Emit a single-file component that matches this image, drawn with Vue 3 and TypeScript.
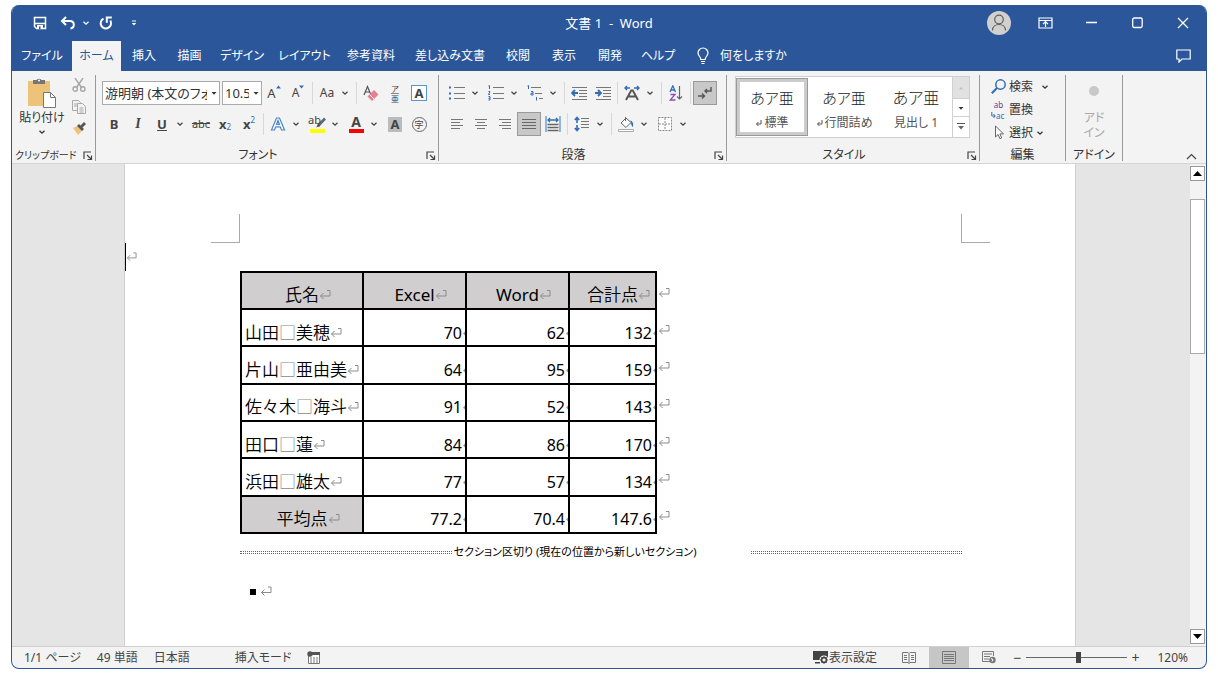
<script setup lang="ts">
import { ref } from 'vue'

interface Tab { label: string; active?: boolean }
interface Header { label: string; latin?: boolean }
interface Row { name: string; cells: string[]; total?: boolean }

const tabs: Tab[] = [
  { label: 'ファイル' },
  { label: 'ホーム', active: true },
  { label: '挿入' },
  { label: '描画' },
  { label: 'デザイン' },
  { label: 'レイアウト' },
  { label: '参考資料' },
  { label: '差し込み文書' },
  { label: '校閲' },
  { label: '表示' },
  { label: '開発' },
  { label: 'ヘルプ' },
]

const headers: Header[] = [
  { label: '氏名' },
  { label: 'Excel', latin: true },
  { label: 'Word', latin: true },
  { label: '合計点' },
]

const rows: Row[] = [
  { name: '山田□美穂', cells: ['70', '62', '132'] },
  { name: '片山□亜由美', cells: ['64', '95', '159'] },
  { name: '佐々木□海斗', cells: ['91', '52', '143'] },
  { name: '田口□蓮', cells: ['84', '86', '170'] },
  { name: '浜田□雄太', cells: ['77', '57', '134'] },
  { name: '平均点', cells: ['77.2', '70.4', '147.6'], total: true },
]

const zoom = ref<number>(52)
</script>

<template>
  <svg class="defs" aria-hidden="true">
    <symbol id="chev" viewBox="0 0 8 8"><path d="M1.5 2.8 4 5.2 6.500 2.8" fill="none" stroke="currentColor" stroke-width="1.3" /></symbol>
    <symbol id="tri" viewBox="0 0 8 8"><path d="M1.500 3h5L4 5.800z" fill="currentColor" /></symbol>
    <symbol id="launch" viewBox="0 0 10 10"><path d="M1 8V1h7M4 4l4 4M8.500 4.500v4h-4" fill="none" stroke="#444" stroke-width="1.200" /></symbol>
    <symbol id="ret" viewBox="0 0 12 12"><path d="M8 1.500h3v5.500H1.500M4.500 4l-3 3 3 3" fill="none" stroke="#8c8c8c" stroke-width="1" /></symbol>
    <symbol id="retsmall" viewBox="0 0 7 7"><path d="M6 0v4H1.500M3.500 2l-2 2 2 2" fill="none" stroke="#555" stroke-width="1" /></symbol>
  </svg>
  <main class="window">
    <header class="titlebar">
      <div class="quick">
        <button aria-label="上書き保存"><svg width="14" height="14" viewBox="0 0 14 14"><path d="M1.500 1.500h11v11h-9l-2-2zM2 7.500h10" fill="none" stroke="#fff" stroke-width="1.500" /><path d="M4 9h6v4H4z" fill="#fff" /><path d="M6 10.500h1.500V13H6z" fill="#2b579a" /></svg></button>
        <button aria-label="元に戻す"><svg width="16" height="14" viewBox="0 0 16 14"><path d="M6 1 2 5l4 4M2.500 5H10c5 0 5 7 .5 7.500" fill="none" stroke="#fff" stroke-width="2" /></svg></button>
        <button class="thin" aria-label="元に戻す一覧"><svg width="8" height="8"><use href="#chev" /></svg></button>
        <button aria-label="繰り返し" class="redo"><svg width="14" height="14" viewBox="0 0 14 14"><path d="M4.500 2.600A5.200 5.200 0 1 0 11.300 4.500M12.800 1.500H7.800v5.200" fill="none" stroke="#fff" stroke-width="2" /></svg></button>
        <button aria-label="クイック アクセスのカスタマイズ"><svg width="8" height="8" viewBox="0 0 8 8"><path d="M2 1.500h4v1H2zM1.800 4h4.400L4 6.500z" fill="#fff" /></svg></button>
      </div>
      <h1>文書 1&nbsp; -&nbsp; Word</h1>
      <div class="syscmds">
        <button aria-label="アカウント"><svg width="24" height="24" viewBox="0 0 24 24"><circle cx="12" cy="12" r="12" fill="#d2d0ce" /><circle cx="12" cy="8.500" r="4.300" fill="none" stroke="#605e5c" stroke-width="1.200" /><path d="M5.500 19.500c0-8 13-8 13 0" fill="none" stroke="#605e5c" stroke-width="1.200" /></svg></button>
        <button aria-label="リボンの表示オプション"><svg width="15" height="12" viewBox="0 0 15 12"><path d="M1 1h13v10H1zM1 3.500h13M7.500 10V5M5 7.200l2.500-2.500L10 7.200" fill="none" stroke="#fff" stroke-width="1.200" /></svg></button>
        <button aria-label="最小化"><svg width="11" height="12" viewBox="0 0 11 12"><path d="M0 5.500h11" stroke="#fff" stroke-width="1.300" /></svg></button>
        <button aria-label="最大化"><svg width="11" height="12" viewBox="0 0 11 12"><rect x=".7" y="1" width="9.500" height="9.500" rx="1.500" fill="none" stroke="#fff" stroke-width="1.300" /></svg></button>
        <button aria-label="閉じる"><svg width="12" height="12" viewBox="0 0 12 12"><path d="m1 1 10 10M11 1 1 11" stroke="#fff" stroke-width="1.300" /></svg></button>
      </div>
    </header>

    <nav class="tabs">
      <button v-for="t in tabs" :key="t.label" class="tab" :class="{ active: t.active }">{{ t.label }}</button>
      <button class="tell">
        <svg width="12" height="18" viewBox="0 0 12 18"><path d="M3.800 12.500c0-3-2.800-3.500-2.800-6.500a5 5 0 0 1 10 0c0 3-2.800 3.500-2.800 6.500zM4 14.500h4M4.500 16.500h3" fill="none" stroke="#fff" stroke-width="1.200" /></svg>
        何をしますか
      </button>
      <button class="comment" aria-label="コメント"><svg width="15" height="14" viewBox="0 0 15 14"><path d="M.8 1h13.400v9H6l-3 3v-3H.8z" fill="none" stroke="#fff" stroke-width="1.200" /></svg></button>
    </nav>

    <section class="ribbon">
      <div class="group clipboard">
        <div class="body">
          <button class="paste">
            <svg width="28" height="30" viewBox="0 0 28 30"><path d="M0 3h22v25H0z" fill="#ecc378" /><path d="M5 6V2h3.500a3 3 0 0 1 5 0H17v4z" fill="#767676" /><circle cx="11" cy="2.500" r="1" fill="#fff" /><path d="M15.500 14.500h7l5 5v10h-12z" fill="#fff" stroke="#777" /><path d="M22.500 14.500v5h5" fill="none" stroke="#777" /></svg>
            <span>貼り付け</span>
            <svg width="8" height="8"><use href="#chev" /></svg>
          </button>
          <div class="clips">
            <button aria-label="切り取り"><svg width="14" height="14" viewBox="0 0 14 14"><g fill="none" stroke="#a6a6a6" stroke-width="1.400"><path d="M3 0 9.500 9.500M11 0 4.500 9.500" /><circle cx="3.200" cy="11" r="2.200" /><circle cx="10.800" cy="11" r="2.200" /></g></svg></button>
            <button aria-label="コピー"><svg width="14" height="14" viewBox="0 0 14 14"><g fill="#f3f3f3" stroke="#aaa"><path d="M.5.5h6l2 2v8h-8z" /><path d="M5.500 3.500h5l3 3v7h-8z" /><path d="M2 4h3M2 6h3M7.500 8h4M7.500 10h4M7.500 12h4" /></g></svg></button>
            <button aria-label="書式のコピー"><svg width="14" height="14" viewBox="0 0 14 14"><path d="m1 6 4-2 5 5-4 4z" fill="#ecc378" /><path d="m5 4 2-2 5 5-2 2zM8.500 3.500 12 0l2 2-3.500 3.500z" fill="#555" /></svg></button>
          </div>
        </div>
        <footer><span>クリップボード</span><button aria-label="クリップボードの設定"><svg width="10" height="10"><use href="#launch" /></svg></button></footer>
      </div>

      <div class="group font">
        <div class="body stack">
          <div class="row">
            <label class="combo family"><select aria-label="フォント"><option>游明朝 (本文のフォント - 日本語)</option></select><svg width="8" height="8"><use href="#tri" /></svg></label>
            <label class="combo size"><select aria-label="フォント サイズ"><option>10.5</option></select><svg width="8" height="8"><use href="#tri" /></svg></label>
            <button class="ic grow" aria-label="フォントの拡大">A<svg width="5" height="4" viewBox="0 0 5 4"><path d="M0 3.500h5L2.500.500z" fill="#2f6eb5" /></svg></button>
            <button class="ic grow small" aria-label="フォントの縮小">A<svg width="5" height="4" viewBox="0 0 5 4"><path d="M0 .5h5L2.500 3.500z" fill="#2f6eb5" /></svg></button>
            <i class="sep"></i>
            <button class="split case" aria-label="文字種の変換"><span>Aa</span><svg width="8" height="8"><use href="#chev" /></svg></button>
            <i class="sep"></i>
            <button class="ic" aria-label="書式のクリア"><svg width="16" height="16" viewBox="0 0 16 16"><path d="M1 10 4.500 1.500 8 10M2.200 7h4.600" fill="none" stroke="#555" stroke-width="1.200" /><path d="m4.500 11.500 6.500-6.500 4.500 4.500-6.500 6.500z" fill="#e77f92" /><path d="m6.500 9.500 4.500 4.500" stroke="#fff" stroke-width=".8" /></svg></button>
            <button class="ic ruby" aria-label="ルビ"><span>ア</span><span>亜</span></button>
            <button class="ic" aria-label="囲み線"><b class="boxed">A</b></button>
          </div>
          <div class="row">
            <button class="ic bold">B</button>
            <button class="ic italic">I</button>
            <button class="split bold" aria-label="下線"><u>U</u><svg width="8" height="8"><use href="#chev" /></svg></button>
            <button class="ic strike"><s>abc</s></button>
            <button class="ic script" aria-label="下付き"><b>x</b><sub>2</sub></button>
            <button class="ic script" aria-label="上付き"><b>x</b><sup>2</sup></button>
            <i class="sep"></i>
            <button class="split" aria-label="文字の効果"><svg class="pic" width="16" height="16" viewBox="0 0 16 16"><path d="M1.500 14 6.500 2h3l5 12h-3l-1.200-3.200H5.700L4.500 14zM6.500 8.500h3L8 4.500z" fill="#fff" stroke="#4a86c8" stroke-width="1.200" /></svg><svg width="8" height="8"><use href="#chev" /></svg></button>
            <button class="split" aria-label="蛍光ペン"><span class="marker"><em>ab</em><svg width="17" height="17" viewBox="0 0 17 17"><path d="M1 13h15v4H1z" fill="#ff0" /><path d="M16 2.500 9 10" stroke="#666" stroke-width="2.600" /><path d="M9.500 8 7 11.500l4-1.500z" fill="#444" /></svg></span><svg width="8" height="8"><use href="#chev" /></svg></button>
            <button class="split" aria-label="フォントの色"><b class="fcolor">A</b><svg width="8" height="8"><use href="#chev" /></svg></button>
            <button class="ic" aria-label="文字の網かけ"><b class="shaded">A</b></button>
            <button class="ic" aria-label="囲い文字"><span class="circled">字</span></button>
          </div>
        </div>
        <footer><span>フォント</span><button aria-label="フォントの設定"><svg width="10" height="10"><use href="#launch" /></svg></button></footer>
      </div>

      <div class="group para">
        <div class="body stack">
          <div class="row">
            <button class="split" aria-label="箇条書き"><svg class="pic" width="16" height="16" viewBox="0 0 16 16"><path d="M5 2.500h11M5 8.500h11M5 13.500h11" stroke="#777" /><path d="M0 1.500h2v2H0zM0 7.500h2v2H0zM0 12.500h2v2H0z" fill="#2f6eb5" /></svg><svg width="8" height="8"><use href="#chev" /></svg></button>
            <button class="split" aria-label="段落番号"><svg class="pic" width="16" height="16" viewBox="0 0 16 16"><path d="M5 2.500h11M5 8.500h11M5 13.500h11" stroke="#777" /><path d="m.5 1 1-.500V4M.5 6.500H2L.5 9.500H2M.5 11.500H2V15H.5M.5 13.300H2" fill="none" stroke="#2f6eb5" /></svg><svg width="8" height="8"><use href="#chev" /></svg></button>
            <button class="split" aria-label="アウトライン"><svg class="pic" width="16" height="16" viewBox="0 0 16 16"><path d="M4 2.500h10M8 8.500h7M12 13.500h4" stroke="#777" /><path d="m.5 1 1-.500V4M4 6.500h2V10H4V8.200h2M9.500 12v3.500" fill="none" stroke="#2f6eb5" /></svg><svg width="8" height="8"><use href="#chev" /></svg></button>
            <i class="sep"></i>
            <button class="ic" aria-label="インデントを減らす"><svg width="16" height="14" viewBox="0 0 16 14"><path d="M1 1.500h15M8 4.500h8M8 7.500h8M8 10.500h8M1 13.500h15" stroke="#777" /><path d="M7 7H1.500M4 4 1 7l3 3" fill="none" stroke="#2f6eb5" stroke-width="1.800" /></svg></button>
            <button class="ic" aria-label="インデントを増やす"><svg width="16" height="14" viewBox="0 0 16 14"><path d="M1 1.500h15M8 4.500h8M8 7.500h8M8 10.500h8M1 13.500h15" stroke="#777" /><path d="M0 7h5.500M3 4l3 3-3 3" fill="none" stroke="#2f6eb5" stroke-width="1.800" /></svg></button>
            <i class="sep"></i>
            <button class="split" aria-label="拡張書式"><svg class="pic" width="16" height="16" viewBox="0 0 16 16"><path d="M2 15 7.200 5.500h1.600L14 15M4 11.500h8" fill="none" stroke="#555" stroke-width="1.900" /><path d="M6 3H1M3 1 1 3l2 2M10 3h5M13 1l2 2-2 2" fill="none" stroke="#2f6eb5" stroke-width="1.400" /></svg><svg width="8" height="8"><use href="#chev" /></svg></button>
            <i class="sep"></i>
            <button class="ic" aria-label="並べ替え"><svg width="14" height="16" viewBox="0 0 14 16"><path d="M1 7 3.800.8 6.500 7M2 5h3.500" fill="none" stroke="#2f6eb5" stroke-width="1.300" /><path d="M1.500 9.500h4.500l-4.800 5.500h5.300" fill="none" stroke="#8a4fb0" stroke-width="1.300" /><path d="M10.500 1v13M8 11.500l2.500 2.500 2.500-2.500" fill="none" stroke="#666" stroke-width="1.200" /></svg></button>
            <i class="sep"></i>
            <button class="ic on" aria-label="編集記号の表示" aria-pressed="true"><svg width="14" height="14" viewBox="0 0 14 14"><path d="M13 1v4H7M9 3 7 5l2 2M0 10h6M4 7.500 6.500 10 4 12.500" fill="none" stroke="#555" stroke-width="1.400" /></svg></button>
          </div>
          <div class="row">
            <button class="ic" aria-label="左揃え"><svg width="12" height="10" viewBox="0 0 12 10"><path d="M0 .5h12M0 3.500h9M0 6.500h12M0 9.500h9" stroke="#777" /></svg></button>
            <button class="ic" aria-label="中央揃え"><svg width="12" height="10" viewBox="0 0 12 10"><path d="M0 .5h12M2 3.500h8M0 6.500h12M2 9.500h8" stroke="#777" /></svg></button>
            <button class="ic" aria-label="右揃え"><svg width="12" height="10" viewBox="0 0 12 10"><path d="M0 .5h12M3 3.500h9M0 6.500h12M3 9.500h9" stroke="#777" /></svg></button>
            <button class="ic on" aria-label="両端揃え" aria-pressed="true"><svg width="14" height="10" viewBox="0 0 14 10"><path d="M0 .5h14M0 3.500h14M0 6.500h14M0 9.500h14" stroke="#666" /></svg></button>
            <button class="ic" aria-label="均等割り付け"><svg width="16" height="16" viewBox="0 0 16 16"><path d="M1 0v16M15 0v16" stroke="#5b93cf" stroke-width="1.300" /><path d="M3 4h10M5 2 3 4l2 2M11 2l2 2-2 2" fill="none" stroke="#2f6eb5" stroke-width="1.300" /><path d="M2.500 8.500h11M2.500 11.500h11M2.500 14.500h11" stroke="#666" stroke-width="1.500" /></svg></button>
            <i class="sep"></i>
            <button class="split" aria-label="行間"><svg class="pic" width="16" height="16" viewBox="0 0 16 16"><path d="M7 2.500h8M7 5.500h8M7 8.500h8M7 11.500h8" stroke="#777" /><path d="M3 1.500V7M.8 4 3 1.500 5.200 4M3 9v5.500M.8 12 3 14.500 5.200 12" fill="none" stroke="#2f6eb5" stroke-width="1.600" /></svg><svg width="8" height="8"><use href="#chev" /></svg></button>
            <i class="sep"></i>
            <button class="split" aria-label="塗りつぶし"><svg class="pic" width="16" height="16" viewBox="0 0 16 16"><path d="M.5 13.500h15v2H.5z" fill="#fff" stroke="#aaa" /><path d="m3 7 5-5 5 4.500-5 5zM7.500 5V1" fill="#fff" stroke="#666" /><path d="M12 4.500c3 .5 3.500 3.500 3 6.500-1.500-.5-2-3-2-5z" fill="#2f6eb5" /></svg><svg width="8" height="8"><use href="#chev" /></svg></button>
            <button class="split" aria-label="罫線"><svg class="pic" width="14" height="14" viewBox="0 0 14 14"><path d="M.5.5h13v13H.5z" fill="#fff" stroke="#888" stroke-dasharray="2 1" /><path d="M7 1v12M1 7h12" stroke="#888" stroke-dasharray="2 1" /></svg><svg width="8" height="8"><use href="#chev" /></svg></button>
          </div>
        </div>
        <footer><span>段落</span><button aria-label="段落の設定"><svg width="10" height="10"><use href="#launch" /></svg></button></footer>
      </div>

      <div class="group styles">
        <div class="body">
          <div class="gallery">
            <button class="style sel"><span class="demo">あア亜</span><span class="cap"><svg width="7" height="7"><use href="#retsmall" /></svg>標準</span></button>
            <button class="style"><span class="demo">あア亜</span><span class="cap"><svg width="7" height="7"><use href="#retsmall" /></svg>行間詰め</span></button>
            <button class="style"><span class="demo head">あア亜</span><span class="cap">見出し 1</span></button>
            <div class="scroller">
              <button class="off" aria-label="前の行"><svg width="6" height="6" viewBox="0 0 8 8"><path d="M1.500 5.500h5L4 2.800z" fill="#bbb" /></svg></button>
              <button aria-label="次の行"><svg width="8" height="8"><use href="#tri" /></svg></button>
              <button aria-label="その他"><svg width="8" height="8" viewBox="0 0 8 8"><path d="M0 .5h8" stroke="#555" /><path d="M1 3h6L4 6.500z" fill="#666" /></svg></button>
            </div>
          </div>
        </div>
        <footer><span>スタイル</span><button aria-label="スタイルの設定"><svg width="10" height="10"><use href="#launch" /></svg></button></footer>
      </div>

      <div class="group edit">
        <div class="body list">
          <button><svg width="15" height="15" viewBox="0 0 15 15"><circle cx="9.500" cy="5.500" r="4.700" fill="none" stroke="#2f6eb5" stroke-width="1.500" /><path d="M6 9 .8 14.200" stroke="#2f6eb5" stroke-width="2" /></svg>検索<svg class="gap" width="8" height="8"><use href="#chev" /></svg></button>
          <button><span class="abac"><span>ab</span><span class="to"><svg width="5" height="7" viewBox="0 0 5 7"><path d="M.8 0v4H4M2.500 2 4.300 4 2.500 6" fill="none" stroke="#2f6eb5" /></svg>ac</span></span>置換</button>
          <button><svg width="15" height="15" viewBox="0 0 15 15"><path d="M4.500 1v11l2.600-2.500 1.800 4.200 1.800-.8-1.800-4h3.600z" fill="#fff" stroke="#666" /></svg>選択<svg width="8" height="8"><use href="#chev" /></svg></button>
        </div>
        <footer><span>編集</span></footer>
      </div>

      <div class="group addin">
        <div class="body">
          <button disabled><i class="dot"></i><span>アド<br>イン</span></button>
        </div>
        <footer><span>アドイン</span></footer>
      </div>
      <button class="collapse" aria-label="リボンを折りたたむ"><svg width="11" height="7" viewBox="0 0 11 7"><path d="m1 6 4.500-4.500L10 6" fill="none" stroke="#444" stroke-width="1.200" /></svg></button>
    </section>

    <section class="workspace">
      <article class="page">
        <div class="corners"><i></i><i></i></div>
        <p class="caretline"><i></i><svg width="11" height="12"><use href="#ret" /></svg></p>
        <table>
          <thead>
            <tr>
              <th v-for="h in headers" :key="h.label" scope="col" :class="{ latin: h.latin }">{{ h.label }}<svg width="12" height="12"><use href="#ret" /></svg></th>
              <td class="rowend"><svg width="12" height="12"><use href="#ret" /></svg></td>
            </tr>
          </thead>
          <tbody>
            <tr v-for="r in rows" :key="r.name">
              <th scope="row" :class="{ plain: !r.total }"><template v-for="(ch, i) in r.name" :key="i"><span v-if="ch === '□'" class="blank">□</span><template v-else>{{ ch }}</template></template><svg width="12" height="12"><use href="#ret" /></svg></th>
              <td v-for="(c, i) in r.cells" :key="i" class="num">{{ c }}<svg width="2" height="12" viewBox="0 0 2 12"><path d="M2 4.500v4L0 6.500z" fill="#999" /></svg></td>
              <td class="rowend"><svg width="12" height="12"><use href="#ret" /></svg></td>
            </tr>
          </tbody>
        </table>
        <div class="section"><i></i><span>セクション区切り (現在の位置から新しいセクション)</span><i></i></div>
        <p class="last"><i></i><svg width="12" height="13"><use href="#ret" /></svg></p>
      </article>
      <div class="vscroll">
        <button aria-label="上へ"><svg width="9" height="5" viewBox="0 0 9 5"><path d="M0 5h9L4.500 0z" /></svg></button>
        <div class="track"><i></i></div>
        <button aria-label="下へ"><svg width="9" height="5" viewBox="0 0 9 5"><path d="M0 0h9L4.500 5z" /></svg></button>
      </div>
    </section>

    <footer class="status">
      <div class="info">
        <span>1/1 ページ</span><span>49 単語</span><span class="lang">日本語</span><span>挿入モード</span>
        <button aria-label="マクロの記録"><svg width="13" height="13" viewBox="0 0 13 13"><path d="M1.500 3.500h11v9h-11z" fill="#fff" stroke="#777" /><path d="M5 1h8v3H5z" fill="#555" /><circle cx="3" cy="3" r="2.700" fill="#555" /><path d="M3 7h8M3 9h8M3 11h8" stroke="#777" stroke-dasharray="2 1" /></svg></button>
      </div>
      <div class="views">
        <button class="display"><svg width="16" height="15" viewBox="0 0 16 15"><path d="M0 1h15v9H0zM2 12h5v1.500H2z" fill="#444" /><circle cx="11" cy="10" r="4.500" fill="#f3f3f3" /><circle cx="11" cy="10" r="2.500" fill="none" stroke="#444" stroke-width="1.500" /><path d="M11 6v8M7 10h8M8.300 7.300l5.400 5.400M13.700 7.300l-5.400 5.400" stroke="#444" stroke-width=".8" /><circle cx="11" cy="10" r="1.300" fill="#f3f3f3" /></svg>表示設定</button>
        <button class="view" aria-label="閲覧モード"><svg width="14" height="12" viewBox="0 0 14 12"><path d="M.5.5H6l1 1 1-1h5.500v10H8l-1 1-1-1H.5zM7 1.500v10M2 3.500h3M2 5.500h3M2 7.500h3M9 3.500h3M9 5.500h3M9 7.500h3" fill="none" stroke="#777" /></svg></button>
        <button class="view on" aria-label="印刷レイアウト"><svg width="14" height="13" viewBox="0 0 14 13"><path d="M.5.5h13v12H.5zM2 3.500h10M2 5.500h10M2 7.500h10M2 9.500h10" fill="none" stroke="#777" /></svg></button>
        <button class="view" aria-label="Web レイアウト"><svg width="14" height="13" viewBox="0 0 14 13"><path d="M8 10.500H.5V.5h11V5M2 3h8M2 5.500h6M2 8h5" fill="none" stroke="#777" /><circle cx="10.500" cy="9" r="3.200" fill="#777" /><path d="m9 7.500 2 1-1 2" fill="none" stroke="#fff" /></svg></button>
        <button class="pm" aria-label="縮小">−</button>
        <input v-model.number="zoom" type="range" min="0" max="100" aria-label="ズーム">
        <button class="pm" aria-label="拡大">+</button>
        <span class="pct">120%</span>
      </div>
    </footer>
  </main>
</template>

<style>
body {
  margin: 0;
  background: #fff;
}
</style>

<style scoped>
.defs {
  position: absolute;
  width: 0;
  height: 0;
}
.window {
  box-sizing: border-box;
  display: flex;
  flex-direction: column;
  min-height: calc(100vh - 12px);
  margin: 5px 11px 7px;
  border: 1px solid #2b579a;
  border-top: 0;
  border-radius: 8px;
  overflow: hidden;
  background: #f3f3f3;
  color: #333;
  font: 12px/16px "Noto Sans", "Noto Sans CJK JP", sans-serif;
  font-feature-settings: "palt";
}
button, select {
  margin: 0;
  padding: 0;
  border: 0;
  background: none;
  color: inherit;
  font: inherit;
  font-feature-settings: inherit;
  white-space: nowrap;
}
button {
  display: flex;
  align-items: center;
  justify-content: center;
}
svg {
  flex: none;
}
p {
  margin: 0;
}

.titlebar {
  display: grid;
  grid-template-columns: 1fr auto 1fr;
  align-items: center;
  height: 36px;
  background: #2b579a;
  color: #fff;
}
.titlebar h1 {
  margin: 0;
  font-size: 13px;
  font-weight: 400;
}
.quick {
  display: flex;
  padding-left: 14px;
}
.quick button {
  width: 28px;
  height: 28px;
}
.quick .thin {
  width: 8px;
}
.quick .redo {
  width: 32px;
}
.quick button:last-child {
  width: 24px;
}
.syscmds {
  display: flex;
  justify-content: flex-end;
}
.syscmds button {
  width: 46px;
  height: 32px;
}

.tabs {
  display: grid;
  grid-template-columns: 60px 49px 46px 45px 60px 65px 68px 90px 46px 46px 46px 50px 118px 1fr;
  height: 30px;
  background: #2b579a;
  color: #fff;
}
.tab.active {
  background: #f3f3f3;
  color: #2b579a;
}
.tell {
  gap: 11px;
}
.comment {
  justify-self: end;
  width: 46px;
}

.ribbon {
  display: flex;
  height: 93px;
  padding-top: 4px;
  box-sizing: border-box;
  border-bottom: 1px solid #d5d5d5;
}
.group {
  box-sizing: border-box;
  display: flex;
  flex-direction: column;
  height: 86px;
  border-right: 1px solid #999;
}
.body {
  display: flex;
  height: 73px;
}
.group footer {
  display: flex;
  align-items: center;
  position: relative;
  height: 13px;
  justify-content: center;
  color: #333;
}
.font footer, .para footer, .styles footer {
  padding-right: 18px;
}
.group footer button {
  position: absolute;
  right: 2px;
  bottom: 0;
}
.stack {
  box-sizing: border-box;
  flex-direction: column;
  gap: 7px;
  padding: 6px 6px 0;
}
.row {
  display: flex;
  height: 24px;
}
.clipboard {
  width: 84px;
}
.clipboard footer {
  justify-content: flex-start;
  padding-left: 3px;
  font-size: 10px;
}
.font {
  width: 343px;
}
.para {
  width: 288px;
}
.paste {
  flex-direction: column;
  justify-content: flex-start;
  gap: 1px;
  width: 60px;
  padding-top: 3px;
}
.paste span {
  line-height: 18px;
}
.clips {
  display: flex;
  flex-direction: column;
  gap: 8px;
  padding-top: 3px;
}
.ic {
  width: 24px;
  color: #444;
}
.ic.on {
  box-sizing: border-box;
  background: #c8c8c8;
  border: 1px solid #999;
}
.split {
  width: 39px;
  justify-content: flex-start;
  color: #444;
}
.split > :first-child {
  width: 24px;
  text-align: center;
}
.split > svg:last-child {
  margin-left: 2px;
}
.sep {
  width: 1px;
  height: 22px;
  margin: 1px 2px;
  background: #d8d8d8;
}
.combo {
  position: relative;
  display: flex;
  margin-right: 2px;
}
.combo:nth-child(2) {
  margin-right: 0;
}
.combo select {
  appearance: none;
  box-sizing: border-box;
  width: 100%;
  height: 24px;
  padding: 0 12px 0 2px;
  border: 1px solid #aaa;
  border-radius: 0;
  background: #fff;
  font-size: 13px;
}
.combo svg {
  position: absolute;
  right: 2px;
  top: 8px;
}
.family {
  width: 118px;
}
.size {
  width: 40px;
}
.grow {
  font-size: 13px;
}
.grow svg {
  align-self: flex-start;
  margin-top: 4px;
}
.grow.small {
  font-size: 12px;
}
.case {
  font-size: 12px;
}
.ruby {
  flex-direction: column;
  font-size: 8px;
  line-height: 9px;
}
.ruby span + span {
  border-top: 1px solid #888;
}
.boxed {
  width: 14px;
  border: 1px solid #5b93cf;
  background: #fff;
  font-size: 13px;
  line-height: 14px;
}
.bold {
  font-size: 13px;
  font-weight: 700;
}
.italic {
  font: italic 700 14px/16px "Liberation Serif", serif;
}
.strike {
  font-size: 11px;
}
.script {
  font-size: 13px;
}
.script sub, .script sup {
  color: #2f6eb5;
  font-size: 8px;
  line-height: 8px;
}
.script sub {
  align-self: flex-end;
  margin-bottom: 5px;
}
.script sup {
  align-self: flex-start;
  margin-top: 4px;
}
.marker {
  position: relative;
  height: 17px;
}
.marker em {
  position: absolute;
  left: 3px;
  top: -4px;
  font-size: 11px;
  font-style: normal;
}
.fcolor {
  box-sizing: border-box;
  height: 17px;
  font-size: 14px;
  line-height: 12px;
  background: linear-gradient(#f00, #f00) center bottom / 15px 4px no-repeat;
}
.shaded {
  width: 14px;
  background: #bbb;
  font-size: 13px;
  line-height: 15px;
}
.circled {
  width: 13px;
  border: 1px solid #666;
  border-radius: 50%;
  font-size: 9px;
  line-height: 13px;
}

.styles {
  width: 253px;
}
.gallery {
  display: flex;
  box-sizing: border-box;
  height: 62px;
  margin: 1px 0 0 8px;
  border: 1px solid #d0d0d0;
  background: #fff;
}
.style {
  box-sizing: border-box;
  flex-direction: column;
  justify-content: flex-end;
  gap: 8px;
  width: 72px;
  margin-top: 1px;
  padding-bottom: 5px;
  height: 58px;
}
.style.sel {
  padding-bottom: 4px;
  border: 1px solid #999;
  box-shadow: inset 0 0 0 3px #ccc;
}
.demo {
  font-size: 15px;
  font-weight: 300;
  line-height: 18px;
  color: #222;
}
.demo.head {
  font-size: 16px;
}
.cap {
  display: flex;
  align-items: center;
  gap: 2px;
  color: #555;
}
.scroller {
  display: grid;
  grid-template-rows: 21px 18px 21px;
  width: 16px;
  border-left: 1px solid #d0d0d0;
}
.scroller button + button {
  border-top: 1px solid #d0d0d0;
}
.scroller .off {
  background: #e1e1e1;
}

.edit {
  width: 86px;
}
.list {
  flex-direction: column;
  padding-left: 11px;
}
.list button {
  justify-content: flex-start;
  gap: 3px;
  height: 23px;
}
.list .gap {
  margin-left: 5px;
}
.abac {
  display: grid;
  width: 15px;
  font-size: 8px;
  line-height: 11px;
  color: #6b3f96;
}
.abac .to {
  display: flex;
  align-items: center;
  color: #2f6eb5;
}
.addin {
  width: 57px;
}
.addin .body {
  justify-content: center;
}
.addin .body button {
  flex-direction: column;
  justify-content: flex-start;
  gap: 14px;
  padding-top: 11px;
  color: #aaa;
  line-height: 15px;
}
.dot {
  width: 10px;
  height: 10px;
  border-radius: 50%;
  background: #c8c8c8;
}
.collapse {
  align-self: flex-end;
  margin: 0 9px 3px auto;
}

.workspace {
  flex: 1;
  display: grid;
  grid-template-columns: 112px minmax(0, 952px) 1fr;
  background: #e5e5e5;
}
.page {
  grid-column: 2;
  box-sizing: border-box;
  border: 1px solid #d0d0d0;
  border-width: 0 1px;
  background: #fff;
  color: #000;
  padding-bottom: 40px;
}
.corners {
  display: flex;
  justify-content: space-between;
  padding: 50px 85px 0 86px;
}
.corners i {
  width: 28px;
  height: 28px;
  border: solid #aaa;
  border-width: 0 1px 1px 0;
}
.corners i:last-child {
  border-width: 0 0 1px 1px;
}
.caretline {
  display: flex;
  align-items: center;
  gap: 0;
  height: 28px;
}
.caretline i {
  width: 1px;
  height: 28px;
  background: #000;
}
table {
  table-layout: fixed;
  border-collapse: collapse;
  width: 430px;
  height: 263px;
  margin-left: 115px;
  font-size: 17px;
  line-height: 24px;
  font-feature-settings: normal;
}
tr {
  height: 37px;
}
th, td {
  box-sizing: border-box;
  padding: 10px 2px 0 14px;
  border: 2px solid #000;
  font-weight: 350;
  white-space: nowrap;
}
thead th, th {
  background: #d0cece;
}
thead th {
  padding-top: 8px;
}
.latin {
  font-weight: 400;
}
thead th:nth-child(1) {
  width: 122px;
}
thead th:nth-child(2), thead th:nth-child(3) {
  width: 103px;
}
thead th:nth-child(4) {
  width: 87px;
}
.plain {
  padding-left: 3px;
  background: none;
  text-align: left;
}
.blank {
  color: #888;
}
.num {
  padding: 10px 0 0;
  text-align: right;
  font-size: 16px;
  font-weight: 400;
}
.num svg {
  margin-left: 1px;
}
.rowend {
  width: 15px;
  padding: 4px 0 0 1px;
  border-width: 0 0 0 2px;
}
.rowend svg {
  display: block;
}
.section {
  display: flex;
  align-items: center;
  gap: 2px;
  margin: 10px 113px 0 115px;
  font-size: 11px;
}
.section i {
  flex: 1;
  height: 1px;
  border: dotted #666;
  border-width: 1px 0;
}
.section i:last-child {
  margin-left: 52px;
}
.last {
  display: flex;
  align-items: center;
  gap: 4px;
  padding: 25px 0 0 125px;
}
.last i {
  width: 6px;
  height: 6px;
  background: #000;
}
.vscroll {
  grid-column: 3;
  justify-self: end;
  display: flex;
  flex-direction: column;
  width: 16px;
  padding: 2px 0;
  background: #f3f3f3;
}
.vscroll button {
  box-sizing: border-box;
  width: 15px;
  height: 15px;
  border: 1px solid #999;
  background: #fff;
}
.track {
  flex: 1;
  padding-top: 18px;
}
.track i {
  display: block;
  box-sizing: border-box;
  width: 15px;
  height: 36%;
  border: 1px solid #aaa;
  background: #fff;
}

.status {
  display: flex;
  justify-content: space-between;
  align-items: center;
  height: 21px;
  border-top: 1px solid #d0d0d0;
  color: #444;
}
.info {
  display: flex;
  gap: 16px;
  padding-left: 12px;
}
.lang {
  margin-right: 29px;
}
.views {
  display: flex;
  align-items: center;
  padding-right: 18px;
}
.display {
  margin-right: 12px;
}
.view {
  width: 40px;
  height: 21px;
}
.view.on {
  background: #c6c6c6;
}
.pm {
  width: 17px;
  font-size: 14px;
}
input[type="range"] {
  appearance: none;
  width: 101px;
  height: 13px;
  margin: 0;
  background: linear-gradient(#666, #666) center / 100% 1px no-repeat;
}
input[type="range"]::-webkit-slider-thumb {
  appearance: none;
  width: 5px;
  height: 11px;
  background: #444;
}
.pct {
  width: 35px;
  margin-left: 9px;
  text-align: right;
}
</style>
